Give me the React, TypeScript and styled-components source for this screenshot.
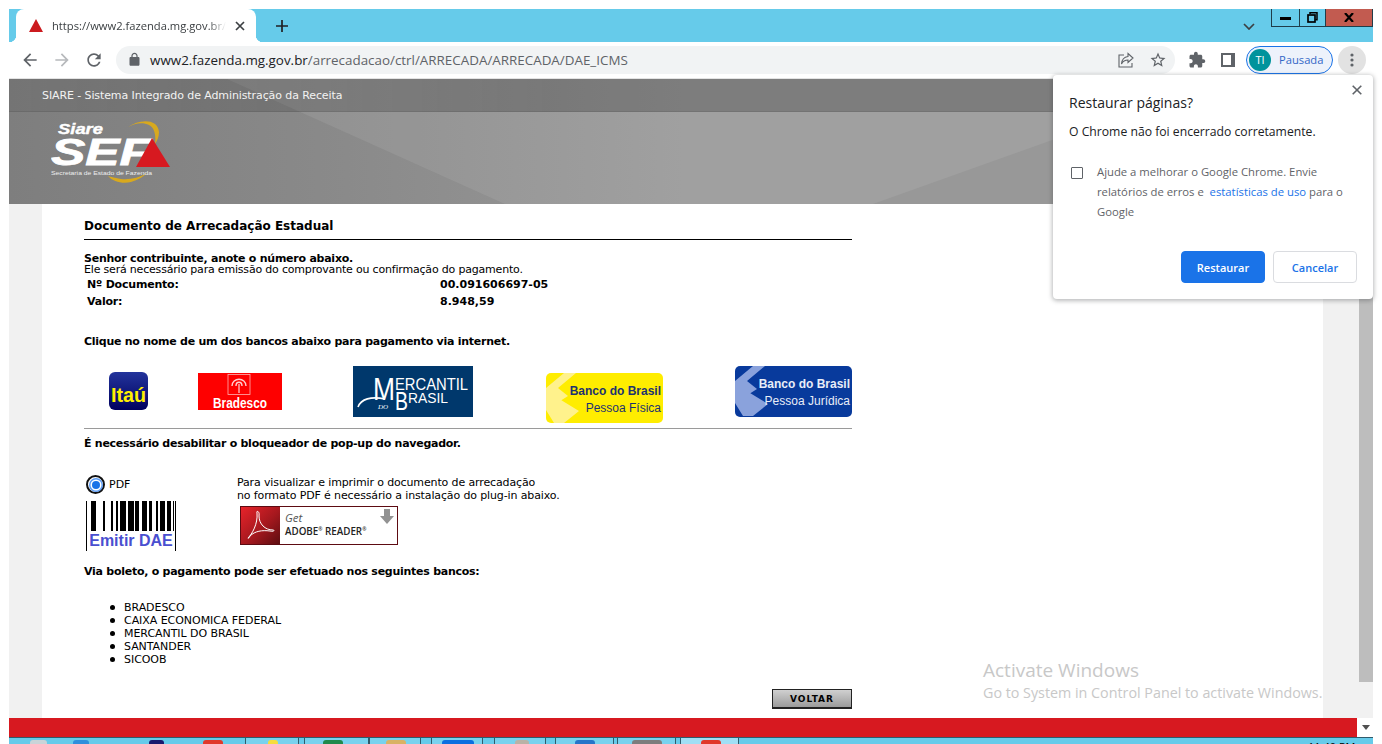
import React from "react";
import styled, { createGlobalStyle } from "styled-components";

const BARS: [number, number][] = [
   [4, 5], [16, 2], [24, 2], [29, 2], [33, 6], [41, 6], [48, 4], [55, 5], [62, 3], [69, 2], [73, 5], [80, 4], [86, 1],
];

const Global = createGlobalStyle`
   html, body {
      margin: 0;
      padding: 0;
      background: #fff;
   }
   * {
      box-sizing: border-box;
   }
`;

const Icon = ({ d, size = 18, color = "#5f6368" }: { d: string; size?: number; color?: string }) => (
   <svg width={size} height={size} viewBox="0 0 24 24" fill={color}>
      <path d={d} />
   </svg>
);

const App = () => {
   return (
      <Frame>
         <Global />
         <TabStrip>
            <Tab>
               <svg width="14" height="13" viewBox="0 0 14 13">
                  <polygon points="7,0 14,13 0,13" fill="#cc1b1f" />
               </svg>
               <TabTitle>https://www2.fazenda.mg.gov.br/arrecadacao</TabTitle>
               <svg width="10" height="10" viewBox="0 0 10 10">
                  <path d="M1 1l8 8M9 1l-8 8" stroke="#3c4043" strokeWidth="1.7" />
               </svg>
            </Tab>
            <NewTab>
               <svg width="12" height="12" viewBox="0 0 12 12">
                  <path d="M6 0v12M0 6h12" stroke="#202124" strokeWidth="1.7" />
               </svg>
            </NewTab>
            <TabSearch>
               <svg width="12" height="7" viewBox="0 0 12 7" fill="none">
                  <path d="M1 1l5 5 5-5" stroke="#3c4043" strokeWidth="1.7" />
               </svg>
            </TabSearch>
            <WindowControls>
               <WinButton $w={28}>
                  <svg width="11" height="4" viewBox="0 0 11 4"><rect width="11" height="3" y="1" fill="#000" /></svg>
               </WinButton>
               <WinButton $w={26}>
                  <svg width="11" height="11" viewBox="0 0 11 11" fill="none">
                     <path d="M3 2V.8h7v7H8.5" stroke="#000" strokeWidth="1.5" />
                     <rect x="1" y="3" width="7" height="7" stroke="#000" strokeWidth="1.7" />
                  </svg>
               </WinButton>
               <WinButton $w={47} $close>
                  <svg width="10" height="9" viewBox="0 0 10 9">
                     <path d="M1 0l8 9M9 0L1 9" stroke="#000" strokeWidth="2.2" />
                  </svg>
               </WinButton>
            </WindowControls>
         </TabStrip>
         <Toolbar>
            <NavButton><Icon size={20} d="M20 11H7.83l5.59-5.59L12 4l-8 8 8 8 1.41-1.41L7.83 13H20v-2z" /></NavButton>
            <NavButton><Icon size={20} color="#b7b9bc" d="M12 4l-1.41 1.41L16.17 11H4v2h12.17l-5.58 5.59L12 20l8-8z" /></NavButton>
            <NavButton><Icon size={20} d="M17.65 6.35C16.2 4.9 14.21 4 12 4c-4.42 0-7.99 3.58-7.99 8s3.57 8 7.99 8c3.73 0 6.84-2.55 7.73-6h-2.08c-.82 2.33-3.04 4-5.65 4-3.31 0-6-2.69-6-6s2.69-6 6-6c1.66 0 3.14.69 4.22 1.78L13 11h7V4l-2.35 2.35z" /></NavButton>
            <UrlPill>
               <Icon size={15} d="M18 8h-1V6c0-2.76-2.24-5-5-5S7 3.24 7 6v2H6c-1.1 0-2 .9-2 2v10c0 1.1.9 2 2 2h12c1.1 0 2-.9 2-2V10c0-1.1-.9-2-2-2zM9 6c0-1.66 1.34-3 3-3s3 1.34 3 3v2H9V6z" />
               <Url><b>www2.fazenda.mg.gov.br</b>/arrecadacao/ctrl/ARRECADA/ARRECADA/DAE_ICMS</Url>
               <PillIcons>
                  <svg width="16" height="16" viewBox="0 0 16 16" fill="none">
                     <path d="M6 3H1v12h13v-4" stroke="#5f6368" strokeWidth="1.1" />
                     <path d="M10 1.5L15 6l-5 4.5V8C7 8 5 9 3.5 12c.3-4 2.5-7 6.5-7.5z" stroke="#5f6368" strokeWidth="1.1" />
                  </svg>
                  <Icon size={18} d="M22 9.24l-7.19-.62L12 2 9.19 8.63 2 9.24l5.46 4.73L5.82 21 12 17.27 18.18 21l-1.63-7.03L22 9.24zM12 15.4l-3.76 2.27 1-4.28-3.32-2.88 4.38-.38L12 6.1l1.71 4.04 4.38.38-3.32 2.88 1 4.28L12 15.4z" />
               </PillIcons>
            </UrlPill>
            <ActionIcons>
               <Icon size={18} d="M20.5 11H19V7c0-1.1-.9-2-2-2h-4V3.5C13 2.12 11.88 1 10.5 1S8 2.12 8 3.5V5H4c-1.1 0-1.99.9-1.99 2v3.8H3.5c1.49 0 2.7 1.21 2.7 2.7s-1.21 2.7-2.7 2.7H2V20c0 1.1.9 2 2 2h3.8v-1.5c0-1.49 1.21-2.7 2.7-2.7 1.49 0 2.7 1.21 2.7 2.7V22H17c1.1 0 2-.9 2-2v-4h1.5c1.38 0 2.5-1.12 2.5-2.5S21.88 11 20.5 11z" />
               <SidePanelIcon />
            </ActionIcons>
            <ProfilePill>
               <Avatar>TI</Avatar>
               <span>Pausada</span>
            </ProfilePill>
            <MenuButton>
               <svg width="4" height="14" viewBox="0 0 4 14" fill="#5f6368">
                  <circle cx="2" cy="2" r="1.6" /><circle cx="2" cy="7" r="1.6" /><circle cx="2" cy="12" r="1.6" />
               </svg>
            </MenuButton>
         </Toolbar>

         <Viewport>
            <Main>
               <Masthead>
                  <TopBar>SIARE - Sistema Integrado de Administração da Receita</TopBar>
                  <Banner>
                     <svg width="122" height="66" viewBox="0 0 122 66">
                        <path d="M77 7C88 -1 107 -2 108 12C108 17 106 21 104 24C105 16 104 8 98 5C92 2 84 3 77 7Z" fill="#d8a91e" />
                        <path d="M57 56C62 62 72 64 80 62C87 60 92 57 96 53C88 58 78 60 70 59C65 58 60 57 57 56Z" fill="#d8a91e" />
                        <text x="7" y="14" fill="#fff" stroke="#fff" strokeWidth="0.4" fontFamily="'Liberation Sans', sans-serif" fontWeight="700" fontStyle="italic" fontSize="15" textLength="45" lengthAdjust="spacingAndGlyphs">Siare</text>
                        <text x="0" y="45" fill="#fff" stroke="#fff" strokeWidth="0.8" fontFamily="'Liberation Sans', sans-serif" fontWeight="700" fontStyle="italic" fontSize="37" textLength="100" lengthAdjust="spacingAndGlyphs">SEF</text>
                        <polygon points="101,18 119,47 85,47" fill="#d71920" />
                        <text x="0" y="55" fill="#eee" fontFamily="'Liberation Sans', sans-serif" fontSize="6" textLength="101" lengthAdjust="spacingAndGlyphs">Secretaria de Estado de Fazenda</text>
                     </svg>
                  </Banner>
               </Masthead>
               <SheetRow>
                  <Sheet>
                     <Title>Documento de Arrecadação Estadual</Title>
                     <Strong>Senhor contribuinte, anote o número abaixo.</Strong>
                     <Note>Ele será necessário para emissão do comprovante ou confirmação do pagamento.</Note>
                     <DataRow>
                        <dt>Nº Documento:</dt>
                        <dd>00.091606697-05</dd>
                     </DataRow>
                     <DataRow>
                        <dt>Valor:</dt>
                        <dd>8.948,59</dd>
                     </DataRow>
                     <Prompt $top={25}>Clique no nome de um dos bancos abaixo para pagamento via internet.</Prompt>
                     <LogoRow>
                        <Logo $left={25} $top={6}>
                           <svg width="39" height="38" viewBox="0 0 39 38">
                              <defs>
                                 <linearGradient id="itau" x1="0" y1="0" x2="0" y2="1">
                                    <stop offset="0" stopColor="#23349c" />
                                    <stop offset="1" stopColor="#00005e" />
                                 </linearGradient>
                              </defs>
                              <rect width="39" height="38" rx="6" fill="url(#itau)" />
                              <text x="19.5" y="30" textAnchor="middle" fill="#ffef00" fontFamily="'Liberation Sans', sans-serif" fontWeight="700" fontSize="20" textLength="35" lengthAdjust="spacingAndGlyphs">Itaú</text>
                           </svg>
                        </Logo>
                        <Logo $left={50} $top={7}>
                           <svg width="84" height="37" viewBox="0 0 84 37">
                              <rect width="84" height="37" fill="#fe0000" />
                              <rect x="30" y="1.5" width="22" height="20" fill="none" stroke="#ffb0b0" strokeWidth="0.8" />
                              <path d="M34 13c0-9 14-9 14 0M38 13c0-5 6-5 6 0" fill="none" stroke="#ffd0d0" strokeWidth="1.4" />
                              <path d="M41 11v9" stroke="#ffd0d0" strokeWidth="1.2" />
                              <text x="42" y="35" textAnchor="middle" fill="#fff" fontFamily="'Liberation Sans', sans-serif" fontWeight="700" fontSize="14" textLength="54" lengthAdjust="spacingAndGlyphs">Bradesco</text>
                           </svg>
                        </Logo>
                        <Logo $left={71} $top={0}>
                           <svg width="120" height="51" viewBox="0 0 120 51">
                              <rect width="120" height="51" fill="#00386c" />
                              <path d="M5 41C8 33 18 30 32 33" fill="none" stroke="#fff" strokeWidth="1.6" />
                              <text x="20" y="34" fill="#fff" fontFamily="'Liberation Sans', sans-serif" fontSize="31" textLength="22" lengthAdjust="spacingAndGlyphs">M</text>
                              <text x="42" y="24" fill="#fff" fontFamily="'Liberation Sans', sans-serif" fontSize="17" textLength="73" lengthAdjust="spacingAndGlyphs">ERCANTIL</text>
                              <text x="42" y="44" fill="#fff" fontFamily="'Liberation Sans', sans-serif" fontSize="25" textLength="13" lengthAdjust="spacingAndGlyphs">B</text>
                              <text x="55" y="37" fill="#fff" fontFamily="'Liberation Sans', sans-serif" fontSize="15" textLength="40" lengthAdjust="spacingAndGlyphs">RASIL</text>
                              <text x="25" y="43" fill="#fff" fontFamily="'Liberation Serif', serif" fontStyle="italic" fontSize="7">DO</text>
                           </svg>
                        </Logo>
                        <Logo $left={73} $top={7}>
                           <BankLogo bg="#ffed00" chevron="#fff28c" ink="#1d3270" label="Pessoa Física" w={117} h={50} />
                        </Logo>
                        <Logo $left={72} $top={0}>
                           <BankLogo bg="#083a9c" chevron="#8aa2dc" ink="#e8edf8" label="Pessoa Jurídica" w={117} h={51} />
                        </Logo>
                     </LogoRow>
                     <SoftRule />
                     <Prompt $top={8}>É necessário desabilitar o bloqueador de pop-up do navegador.</Prompt>
                     <EmitRow>
                        <EmitColumn>
                           <RadioLine>
                              <Radio><RadioDot /></Radio>
                              <span>PDF</span>
                           </RadioLine>
                           <Barcode>
                              <svg width="88" height="30" viewBox="0 0 88 30">
                                 {BARS.map(([x, w]) => <rect key={x} x={x} width={w} height="30" fill="#000" />)}
                              </svg>
                              <span>Emitir DAE</span>
                           </Barcode>
                        </EmitColumn>
                        <PluginColumn>
                           <PluginLine>Para visualizar e imprimir o documento de arrecadação</PluginLine>
                           <PluginLine>no formato PDF é necessário a instalação do plug-in abaixo.</PluginLine>
                           <AdobeBadge>
                              <AdobeMark>
                                 <svg width="30" height="32" viewBox="0 0 30 32" fill="none">
                                    <path d="M2 28C6 24 12 14 11 3c-1-3 3-2 2 3 0 8 6 14 14 14 2 0 1 2-3 1-8-1-15 0-20 5-1 2-2 3-2 2z" stroke="#fff" strokeWidth="1" />
                                 </svg>
                              </AdobeMark>
                              <AdobeText>
                                 <em>Get</em>
                                 <strong>ADOBE<sup>®</sup> READER<sup>®</sup></strong>
                              </AdobeText>
                              <svg width="14" height="15" viewBox="0 0 14 15">
                                 <path d="M4 0h6v7h4l-7 8-7-8h4z" fill="#929292" />
                              </svg>
                           </AdobeBadge>
                        </PluginColumn>
                     </EmitRow>
                     <Prompt $top={14}>Via boleto, o pagamento pode ser efetuado nos seguintes bancos:</Prompt>
                     <BankList>
                        <li>BRADESCO</li>
                        <li>CAIXA ECONOMICA FEDERAL</li>
                        <li>MERCANTIL DO BRASIL</li>
                        <li>SANTANDER</li>
                        <li>SICOOB</li>
                     </BankList>
                     <BackRow>
                        <BackButton>VOLTAR</BackButton>
                     </BackRow>
                  </Sheet>
               </SheetRow>
               <Footer />
            </Main>
            <Scrollbar>
               <Thumb />
               <Track />
               <ScrollEnd>
                  <svg width="8" height="5" viewBox="0 0 8 5"><polygon points="0,0 8,0 4,5" fill="#505050" /></svg>
               </ScrollEnd>
            </Scrollbar>
            <Watermark>
               <h2>Activate Windows</h2>
               <p>Go to System in Control Panel to activate Windows.</p>
            </Watermark>
         </Viewport>

         <Taskbar>
            <TrayGlyph $left={21} $w={17} $color="#c9d4d8" />
            <TrayGlyph $left={26} $w={16} $color="#2f8fdc" />
            <TrayGlyph $left={60} $w={15} $color="#1a1a6e" />
            <TrayGlyph $left={39} $w={20} $color="#e0392b" />
            <TaskButton $left={22} $w={54}><TrayGlyph $left={22} $w={10} $color="#f6dc3c" /></TaskButton>
            <TaskButton $left={5} $w={65}><TrayGlyph $left={18} $w={20} $color="#1f8a4c" /></TaskButton>
            <TaskButton $left={0} $w={52}><TrayGlyph $left={16} $w={20} $color="#d9b264" /></TaskButton>
            <TaskButton $left={10} $w={52}><TrayGlyph $left={10} $w={32} $color="#0a6fe0" /></TaskButton>
            <TaskButton $left={11} $w={52}><TrayGlyph $left={20} $w={14} $color="#b9b2a6" /></TaskButton>
            <TaskButton $left={9} $w={59}><TrayGlyph $left={19} $w={20} $color="#2575c9" /></TaskButton>
            <TaskButton $left={3} $w={59}><TrayGlyph $left={14} $w={30} $color="#7d7d7d" /></TaskButton>
            <TaskButton $left={4} $w={59} $active><TrayGlyph $left={20} $w={20} $color="#e0392b" /></TaskButton>
            <Clock>11:40 PM</Clock>
         </Taskbar>

         <RestoreBubble>
            <BubbleClose>
               <svg width="10" height="10" viewBox="0 0 10 10">
                  <path d="M.7.7l8.6 8.6M9.3.7L.7 9.3" stroke="#5f6368" strokeWidth="1.6" />
               </svg>
            </BubbleClose>
            <BubbleTitle>Restaurar páginas?</BubbleTitle>
            <BubbleText>O Chrome não foi encerrado corretamente.</BubbleText>
            <ConsentRow>
               <CheckBox />
               <ConsentText>
                  Ajude a melhorar o Google Chrome. Envie relatórios de erros e &nbsp;<a>estatísticas de uso</a> para o Google
               </ConsentText>
            </ConsentRow>
            <BubbleActions>
               <BubbleButton $primary>Restaurar</BubbleButton>
               <BubbleButton>Cancelar</BubbleButton>
            </BubbleActions>
         </RestoreBubble>
      </Frame>
   );
};

const BankLogo = ({ bg, chevron, ink, label, w, h }: { bg: string; chevron: string; ink: string; label: string; w: number; h: number }) => (
   <svg width={w} height={h} viewBox={`0 0 ${w} ${h}`}>
      <rect width={w} height={h} rx="5" fill={bg} />
      <path d="M0 15L18 0H30L12 15 22 23 0 37zM0 37L15 27 33 38 18 50H8z" fill={chevron} />
      <text x={w - 2} y="22" textAnchor="end" fill={ink} fontFamily="'Liberation Sans', sans-serif" fontWeight="700" fontSize="12">Banco do Brasil</text>
      <text x={w - 2} y="39" textAnchor="end" fill={ink} fontFamily="'Liberation Sans', sans-serif" fontSize="12">{label}</text>
   </svg>
);

const Frame = styled.div`
   position: relative;
   height: 744px;
   padding: 9px 9px 0;
   overflow: hidden;
   display: flex;
   flex-direction: column;
   font-family: "DejaVu Sans", Verdana, sans-serif;
   font-size: 11px;
   color: #000;
`;

const TabStrip = styled.div`
   height: 33px;
   flex: none;
   display: flex;
   align-items: flex-start;
   background: #66cbea;
   padding-left: 7px;
`;

const Tab = styled.div`
   position: relative;
   width: 240px;
   height: 33px;
   padding: 0 11px 0 13px;
   display: flex;
   align-items: center;
   gap: 9px;
   background: #fff;
   border-radius: 8px 8px 0 0;

   &::before, &::after {
      content: "";
      position: absolute;
      bottom: 0;
      width: 7px;
      height: 7px;
   }

   &::before {
      left: -7px;
      background: radial-gradient(circle at 0 0, #66cbea 7px, #fff 7.5px);
   }

   &::after {
      right: -7px;
      background: radial-gradient(circle at 100% 0, #66cbea 7px, #fff 7.5px);
   }
`;

const TabTitle = styled.span`
   flex: 1;
   overflow: hidden;
   white-space: nowrap;
   font: 11.2px "Open Sans", sans-serif;
   color: #3c4043;
   mask-image: linear-gradient(90deg, #000 90%, transparent);
`;

const NewTab = styled.div`
   width: 20px;
   height: 33px;
   margin-left: 16px;
   display: flex;
   align-items: center;
   justify-content: center;
`;

const TabSearch = styled.div`
   margin-left: auto;
   margin-right: 16px;
   height: 33px;
   padding-top: 2px;
   display: flex;
   align-items: center;
`;

const WindowControls = styled.div`
   display: flex;
   height: 18px;
   border-left: 1px solid #1f3d4a;
   border-bottom: 1px solid #1f3d4a;
`;

const WinButton = styled.div<{ $w: number; $close?: boolean }>`
   width: ${(p) => p.$w}px;
   display: flex;
   align-items: center;
   justify-content: center;
   background: ${(p) => (p.$close ? "#c25b50" : "transparent")};
   border-right: 1px solid #1f3d4a;
`;

const Toolbar = styled.div`
   height: 37px;
   flex: none;
   display: flex;
   align-items: center;
   padding: 0 7px 1px 5px;
   background: #fff;
   border-bottom: 1px solid #e3e3e3;
`;

const NavButton = styled.div`
   width: 32px;
   display: flex;
   justify-content: center;
`;

const UrlPill = styled.div`
   width: 1059px;
   height: 28px;
   margin-left: 6px;
   padding: 0 8px 0 11px;
   display: flex;
   align-items: center;
   gap: 8px;
   background: #f1f3f4;
   border-radius: 14px;
`;

const Url = styled.div`
   flex: 1;
   font: 13.4px "Open Sans", sans-serif;
   color: #5f6368;
   white-space: nowrap;

   b {
      font-weight: 400;
      color: #202124;
   }
`;

const PillIcons = styled.div`
   display: flex;
   align-items: center;
   gap: 15px;
`;

const ActionIcons = styled.div`
   display: flex;
   align-items: center;
   gap: 15px;
   margin-left: 13px;
`;

const SidePanelIcon = styled.div`
   width: 14px;
   height: 14px;
   border: 2px solid #5f6368;
   border-right-width: 4px;
   background: #fff;
`;

const ProfilePill = styled.div`
   width: 87px;
   height: 28px;
   margin-left: 11px;
   padding-left: 2px;
   display: flex;
   align-items: center;
   gap: 8px;
   background: #edf2fb;
   border: 1px solid #1a73e8;
   border-radius: 14px;
   font: 11.2px "Open Sans", sans-serif;
   color: #3367c7;
`;

const Avatar = styled.div`
   width: 22px;
   height: 22px;
   display: flex;
   align-items: center;
   justify-content: center;
   border-radius: 50%;
   background: #00939c;
   color: #fff;
   font-size: 11px;
`;

const MenuButton = styled.div`
   width: 28px;
   height: 28px;
   margin-left: 5px;
   display: flex;
   align-items: center;
   justify-content: center;
   border-radius: 50%;
   background: #e2e2e2;
`;

const Viewport = styled.div`
   position: relative;
   flex: 1;
   min-height: 0;
   display: flex;
`;

const Main = styled.div`
   flex: 1;
   min-width: 0;
   display: flex;
   flex-direction: column;
`;

const Masthead = styled.div`
   position: relative;
   height: 125px;
   flex: none;
   overflow: hidden;
   background: linear-gradient(90deg, #7e7e7e 0, #8a8a8a 25%, #989898 50%);

   &::before {
      content: "";
      position: absolute;
      inset: 0;
      background: rgba(255, 255, 255, 0.08);
      clip-path: polygon(218px 0, 1214px 0, 864px 125px, 496px 125px);
   }
`;

const TopBar = styled.div`
   position: relative;
   height: 33px;
   padding-left: 33px;
   display: flex;
   align-items: center;
   color: #f2f2f2;
   letter-spacing: -0.1px;
   background: linear-gradient(90deg, rgba(0, 0, 0, 0.08), rgba(0, 0, 0, 0.22) 40%);
   border-bottom: 1px solid rgba(0, 0, 0, 0.08);
`;

const Banner = styled.div`
   position: relative;
   height: 92px;
   padding: 8px 0 0 42px;
`;

const SheetRow = styled.div`
   flex: 1;
   min-height: 0;
   padding: 0 36px 0 33px;
   background: #f1f1f1;
`;

const Sheet = styled.div`
   height: 100%;
   padding: 14px 471px 0 42px;
   background: #fff;
`;

const Title = styled.h1`
   margin: 0 0 12px;
   height: 22px;
   font-size: 12px;
   line-height: 17px;
   font-weight: 700;
   border-bottom: 1px solid #000;
`;

const Strong = styled.div`
   font-weight: 700;
   line-height: 13px;
   letter-spacing: -0.25px;
`;

const Note = styled.div`
   line-height: 13px;
   margin-top: -2px;
   white-space: nowrap;
   letter-spacing: -0.19px;
`;

const DataRow = styled.dl`
   margin: 0;
   height: 17px;
   padding: 2px 0 0 3px;
   display: grid;
   grid-template-columns: 353px 1fr;
   font-weight: 700;

   dt, dd {
      margin: 0;
   }

   dt {
      letter-spacing: -0.2px;
   }
`;

const Prompt = styled.div<{ $top: number }>`
   margin-top: ${(p) => p.$top}px;
   line-height: 14px;
   font-weight: 700;
   letter-spacing: -0.26px;
`;

const LogoRow = styled.div`
   height: 57px;
   margin-top: 17px;
   display: flex;
   align-items: flex-start;
`;

const Logo = styled.div<{ $left: number; $top: number }>`
   margin: ${(p) => p.$top}px 0 0 ${(p) => p.$left}px;
   display: flex;
`;

const SoftRule = styled.div`
   height: 1px;
   margin-top: 5px;
   background: #9a9a9a;
`;

const EmitRow = styled.div`
   margin-top: 24px;
   display: flex;
`;

const EmitColumn = styled.div`
   width: 153px;
   padding-left: 2px;
`;

const RadioLine = styled.div`
   height: 19px;
   display: flex;
   align-items: center;
   gap: 4px;
`;

const Radio = styled.div`
   width: 19px;
   height: 19px;
   display: flex;
   align-items: center;
   justify-content: center;
   border-radius: 50%;
   background: #fff;
   border: 2px solid #111;
`;

const RadioDot = styled.div`
   width: 8px;
   height: 8px;
   border-radius: 50%;
   background: #1a73e8;
   box-shadow: 0 0 0 1.5px #fff, 0 0 0 3px #5a9bf5;
`;

const Barcode = styled.div`
   width: 90px;
   height: 50px;
   margin-top: 7px;
   display: flex;
   flex-direction: column;
   border-left: 1px solid #000;
   border-right: 1px solid #000;

   span {
      font: 700 16px/20px "Liberation Sans", sans-serif;
      color: #4a4fd0;
      text-align: center;
      white-space: nowrap;
   }
`;

const PluginColumn = styled.div`
   display: flex;
   flex-direction: column;
   padding-top: 1px;
`;

const PluginLine = styled.div`
   line-height: 13px;
   white-space: nowrap;
   letter-spacing: -0.13px;
`;

const AdobeBadge = styled.div`
   width: 158px;
   height: 39px;
   margin: 4px 0 0 3px;
   display: flex;
   background: #fff;
   border: 1px solid #5d0b12;

   > svg {
      margin: 2px 3px 0 0;
   }
`;

const AdobeMark = styled.div`
   width: 39px;
   flex: none;
   display: flex;
   align-items: center;
   justify-content: center;
   background: linear-gradient(135deg, #e8232a, #a5181e 55%, #5c0d10);
`;

const AdobeText = styled.div`
   flex: 1;
   padding: 4px 0 0 5px;
   display: flex;
   flex-direction: column;
   font-family: "Open Sans", sans-serif;
   color: #222;

   em {
      font-size: 11.5px;
      line-height: 14px;
      color: #555;
   }

   strong {
      font-size: 9.8px;
      line-height: 13px;
      font-weight: 600;
      white-space: nowrap;
   }

   sup {
      font-size: 5px;
      line-height: 0;
   }
`;

const BankList = styled.ul`
   margin: 22px 0 0;
   padding-left: 40px;
   line-height: 13px;
   letter-spacing: -0.05px;
   list-style: none;

   li {
      position: relative;
   }

   li::before {
      content: "";
      position: absolute;
      left: -14px;
      top: 4px;
      width: 5px;
      height: 5px;
      border-radius: 50%;
      background: #000;
   }
`;

const BackRow = styled.div`
   margin-top: 23px;
   display: flex;
   justify-content: flex-end;
`;

const BackButton = styled.div`
   width: 80px;
   height: 20px;
   display: flex;
   align-items: center;
   justify-content: center;
   font: 700 9px "DejaVu Sans", sans-serif;
   letter-spacing: 1px;
   border: 1px solid #222;
   border-bottom-width: 2px;
   background: linear-gradient(180deg, #d0d0d0, #9b9b9b);
`;

const Footer = styled.div`
   height: 19px;
   flex: none;
   margin-right: 2px;
   background: #d71920;
`;

const Scrollbar = styled.div`
   width: 14px;
   flex: none;
   display: flex;
   flex-direction: column;
   background: #f1f1f1;
`;

const Thumb = styled.div`
   height: 603px;
   flex: none;
   background: #bdbdbd;
`;

const Track = styled.div`
   flex: 1;
`;

const ScrollEnd = styled.div`
   height: 19px;
   flex: none;
   display: flex;
   align-items: center;
   justify-content: center;
   background: #fff;
`;

const Watermark = styled.div`
   position: absolute;
   left: 974px;
   top: 579px;
   font-family: "Open Sans", sans-serif;
   color: #c8c8c8;

   h2 {
      margin: 0;
      font-size: 19px;
      line-height: 24px;
      font-weight: 400;
   }

   p {
      margin: 1px 0 0;
      font-size: 14.3px;
      line-height: 20px;
      white-space: nowrap;
   }
`;

const Taskbar = styled.div`
   height: 7px;
   flex: none;
   display: flex;
   overflow: hidden;
   background: #66cbea;
   border-top: 1px solid #2f5b6b;
`;

const TrayGlyph = styled.div<{ $left: number; $w: number; $color: string }>`
   width: ${(p) => p.$w}px;
   height: 6px;
   flex: none;
   margin: 2px 0 0 ${(p) => p.$left}px;
   background: ${(p) => p.$color};
   border-radius: 3px 3px 0 0;
`;

const TaskButton = styled.div<{ $left: number; $w: number; $active?: boolean }>`
   width: ${(p) => p.$w}px;
   flex: none;
   margin-left: ${(p) => p.$left}px;
   display: flex;
   background: ${(p) => (p.$active ? "#a0dff5" : "#78d2ee")};
   border: 1px solid #2f5b6b;
   border-width: 0 1px;
`;

const Clock = styled.div`
   margin-left: 569px;
   padding-top: 3px;
   font: 11px/12px "Open Sans", sans-serif;
   white-space: nowrap;
`;

const RestoreBubble = styled.div`
   position: absolute;
   top: 75px;
   right: 9px;
   width: 320px;
   height: 224px;
   padding: 17px 16px 0;
   background: #fff;
   border-radius: 4px;
   box-shadow: 0 1px 4px 1px rgba(60, 64, 67, 0.35);
   font-family: "Open Sans", sans-serif;
`;

const BubbleClose = styled.div`
   position: absolute;
   top: 10px;
   right: 11px;
   display: flex;
`;

const BubbleTitle = styled.div`
   font-size: 14px;
   line-height: 22px;
   color: #202124;
`;

const BubbleText = styled.div`
   margin-top: 9px;
   font-size: 12.2px;
   line-height: 18px;
   color: #202124;
`;

const ConsentRow = styled.div`
   margin-top: 21px;
   display: flex;
`;

const CheckBox = styled.div`
   width: 12px;
   height: 12px;
   flex: none;
   margin: 5px 14px 0 2px;
   border: 1.5px solid #5f6368;
   border-radius: 1px;
`;

const ConsentText = styled.div`
   width: 250px;
   font-size: 11.3px;
   line-height: 20px;
   color: #5f6368;

   a {
      color: #1a73e8;
   }
`;

const BubbleActions = styled.div`
   margin-top: 29px;
   display: flex;
   justify-content: flex-end;
   gap: 8px;
`;

const BubbleButton = styled.div<{ $primary?: boolean }>`
   width: 84px;
   height: 32px;
   display: flex;
   align-items: center;
   justify-content: center;
   border-radius: 4px;
   font-size: 11px;
   font-weight: 600;
   color: ${(p) => (p.$primary ? "#fff" : "#1a73e8")};
   background: ${(p) => (p.$primary ? "#1a73e8" : "#fff")};
   border: 1px solid ${(p) => (p.$primary ? "#1a73e8" : "#dadce0")};
`;

export default App;
